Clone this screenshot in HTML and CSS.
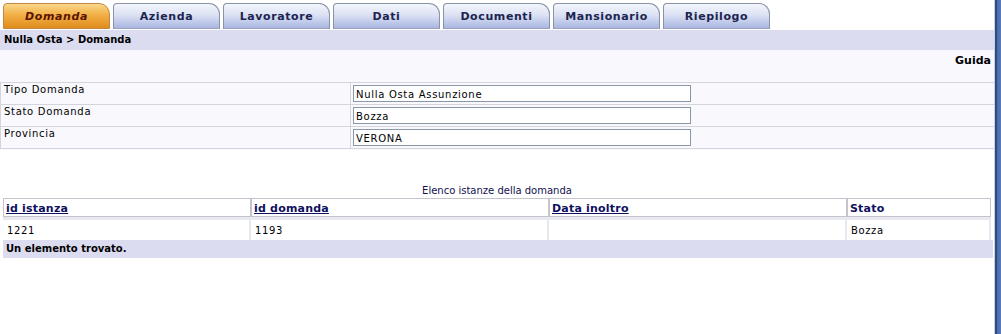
FILE: index.html
```html
<!DOCTYPE html>
<html lang="it">
<head>
  <meta charset="UTF-8" />
  <title>Nulla Osta - Domanda</title>
  <link rel="stylesheet" href="styles.css">
</head>
<body>
  <div class="frame">
    <div class="page">
      <div class="tabs">
        <a class="tab tab-attivo">Domanda</a>
        <a class="tab">Azienda</a>
        <a class="tab">Lavoratore</a>
        <a class="tab">Dati</a>
        <a class="tab">Documenti</a>
        <a class="tab">Mansionario</a>
        <a class="tab">Riepilogo</a>
      </div>

      <div class="percorso">Nulla Osta &gt; Domanda</div>

      <div class="area-form">
        <div class="guida">Guida</div>
        <table class="form">
          <tr>
            <td class="etichetta">Tipo Domanda</td>
            <td><input type="text" class="campo" value="Nulla Osta Assunzione" readonly></td>
          </tr>
          <tr>
            <td class="etichetta">Stato Domanda</td>
            <td><input type="text" class="campo" value="Bozza" readonly></td>
          </tr>
          <tr>
            <td class="etichetta">Provincia</td>
            <td><input type="text" class="campo" value="VERONA" readonly></td>
          </tr>
        </table>
      </div>

      <div class="elenco">
        <div class="titolo-elenco">Elenco istanze della domanda</div>
        <table class="lista">
          <tr>
            <th class="col1"><a href="#">id istanza</a></th>
            <th class="col2"><a href="#">id domanda</a></th>
            <th class="col3"><a href="#">Data inoltro</a></th>
            <th class="col4">Stato</th>
          </tr>
          <tr>
            <td>1221</td>
            <td>1193</td>
            <td></td>
            <td>Bozza</td>
          </tr>
        </table>
        <div class="totale">Un elemento trovato.</div>
      </div>
    </div>
    <div class="bordo"></div>
  </div>
</body>
</html>
```

FILE: styles.css
```css
html, body {
  margin: 0;
  height: 100%;
}

body {
  font-family: "DejaVu Sans", Verdana, sans-serif;
  font-size: 10px;
  color: #000;
  background: #fff;
}

.frame {
  display: flex;
  height: 100%;
}

.page {
  flex: 1;
  min-width: 0;
}

.bordo {
  width: 6px;
  border-left: 1px solid #c8d0e0;
  background: linear-gradient(to right, #2c4c88 0, #2c4c88 2px, #4a6aa8 2px, #5a7ab8 100%);
}

/* schede */
.tabs {
  display: flex;
  gap: 3px;
  padding: 3px 0 0 3px;
  height: 24px;
  margin-bottom: 3px;
}

.tab {
  width: 105px;
  height: 23px;
  display: flex;
  align-items: center;
  justify-content: center;
  border: 1px solid #8a92a8;
  border-bottom-color: #9aa2c0;
  border-radius: 4px 11px 0 0;
  background: linear-gradient(to bottom, #f4f6fc 0%, #dce2f4 45%, #aab6e0 100%);
  color: #1c2450;
  font-weight: bold;
  font-size: 11px;
  letter-spacing: 0.6px;
  text-decoration: none;
  padding-top: 1px;
  box-sizing: content-box;
}

.tab-attivo {
  border-color: #c08848;
  background: linear-gradient(to bottom, #fbd88c 0%, #f2b046 45%, #e08c1c 100%);
  color: #5a1400;
  font-style: italic;
}

/* percorso */
.percorso {
  background: #dcdcf0;
  height: 20px;
  line-height: 20px;
  padding-left: 4px;
  font-weight: bold;
}

.area-form {
  background: #f8f8fd;
  padding-top: 1px;
  padding-bottom: 1px;
}

.guida {
  text-align: right;
  font-weight: bold;
  font-size: 11px;
  padding: 3px 3px 0 0;
  height: 28px;
}

.form {
  width: 100%;
  border-collapse: collapse;
}

.form td {
  border-top: 1px solid #d4d4dc;
  border-bottom: 1px solid #d4d4dc;
  padding: 0;
  vertical-align: top;
}

.etichetta {
  width: 346px;
  padding: 1px 0 0 3px !important;
  border-left: 1px solid #d4d4dc;
  border-right: 1px solid #d4d4dc;
  letter-spacing: 0.7px;
}

.campo {
  display: block;
  width: 338px;
  height: 17px;
  margin: 2px 0 2px 2px;
  box-sizing: border-box;
  border: 1px solid #8898a8;
  background: #fff;
  font-family: "DejaVu Sans", Verdana, sans-serif;
  font-size: 10px;
  letter-spacing: 0.7px;
  padding: 1px 2px 0;
  color: #000;
  outline: none;
}

/* elenco */
.elenco {
  padding: 35px 3px 0 3px;
}

.titolo-elenco {
  text-align: center;
  color: #101050;
  height: 13px;
}

.lista {
  width: 988px;
  border-collapse: separate;
  border-spacing: 0;
  background: #e8e8f0;
}

.lista th {
  background: #fff;
  border: 1px solid #c4c4cc;
  text-align: left;
  font-size: 11px;
  letter-spacing: 0.2px;
  padding: 1px 2px 0;
  height: 16px;
  color: #101060;
}

.lista th a {
  color: #101060;
}

.lista td {
  background: #fff;
  height: 19px;
  padding: 1px 4px 0;
  border-top: 3px solid #e8e8f0;
  border-right: 2px solid #e8e8f0;
  letter-spacing: 0.6px;
}

.col1 { width: 242px; }
.col2 { width: 292px; }
.col3 { width: 292px; }

.totale {
  background: #dcdcf0;
  font-weight: bold;
  height: 18px;
  line-height: 18px;
  padding-left: 3px;
  width: 987px;
}
```
